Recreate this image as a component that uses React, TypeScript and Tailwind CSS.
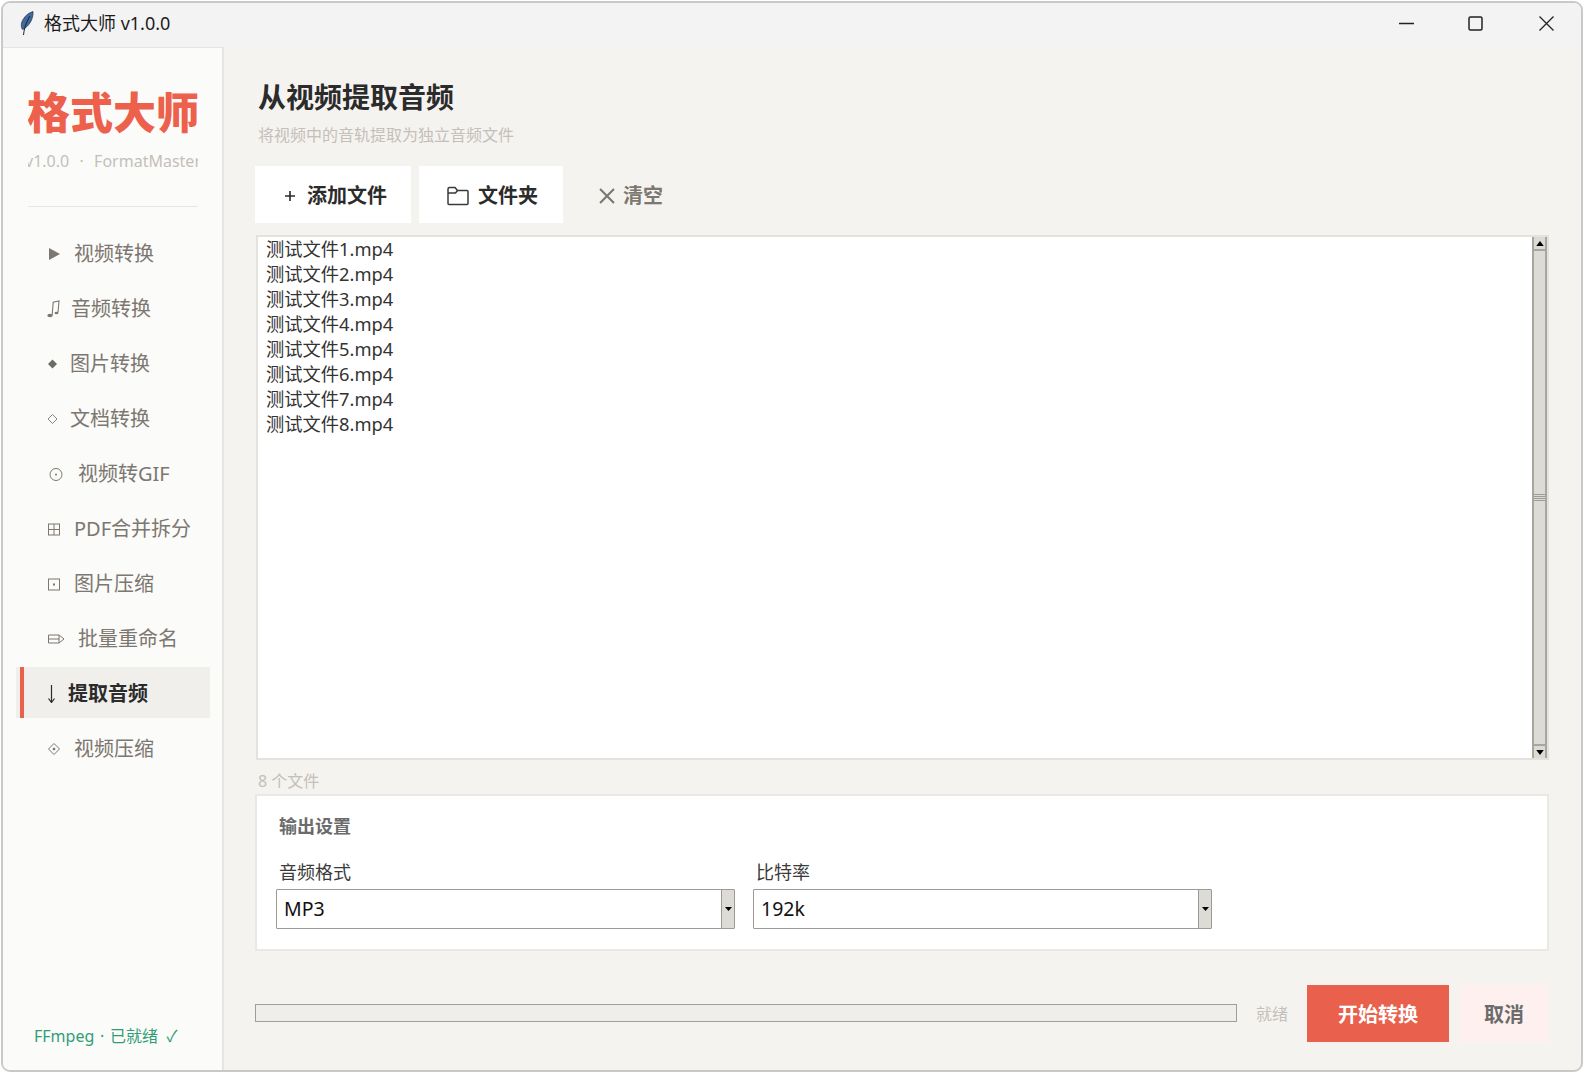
import { ReactNode } from 'react';

const FONT = "font-['Noto_Sans','Noto_Sans_CJK_SC',sans-serif]";

const iconClass = 'h-[16px] w-[16px] shrink-0';

const icons: Record<string, ReactNode> = {
  play: (
    <svg className={iconClass} viewBox="0 0 16 16">
      <path d="M2 2 L13 8 L2 14 Z" fill="#7c7770" />
    </svg>
  ),
  music: (
    <svg className="h-[18px] w-[14px] shrink-0" viewBox="0 0 14 18" fill="none">
      <path d="M5.2 15 L6.2 2.2 L12 1 L11 12.5" stroke="#7c7770" strokeWidth="1.1" />
      <ellipse cx="3" cy="15.5" rx="2.7" ry="1.8" fill="#7c7770" />
      <ellipse cx="9.5" cy="13" rx="1.9" ry="1.3" fill="#7c7770" />
    </svg>
  ),
  diamond: (
    <svg className={iconClass} viewBox="0 0 16 16">
      <path d="M1 8 L5.5 3.5 L10 8 L5.5 12.5 Z" fill="#6f6a64" />
    </svg>
  ),
  diamondOutline: (
    <svg className={iconClass} viewBox="0 0 16 16" fill="none">
      <path d="M1 8 L5.5 3.5 L10 8 L5.5 12.5 Z" stroke="#7c7770" strokeWidth="0.9" />
    </svg>
  ),
  circle: (
    <svg className={iconClass} viewBox="0 0 16 16" fill="none">
      <circle cx="9" cy="8.5" r="6" stroke="#7c7770" strokeWidth="1" />
      <circle cx="9" cy="8.5" r="1" fill="#7c7770" />
    </svg>
  ),
  grid: (
    <svg className={iconClass} viewBox="0 0 16 16" fill="none" stroke="#7c7770" strokeWidth="1">
      <rect x="1.5" y="3" width="11" height="11" />
      <path d="M7 3 V14 M1.5 8.5 H12.5" />
    </svg>
  ),
  dotSquare: (
    <svg className={iconClass} viewBox="0 0 16 16" fill="none">
      <rect x="1.5" y="3" width="11" height="11" stroke="#7c7770" strokeWidth="1" />
      <rect x="6" y="7.5" width="2" height="2" fill="#7c7770" />
    </svg>
  ),
  pencil: (
    <svg className="h-[16px] w-[18px] shrink-0" viewBox="0 0 18 16" fill="none" stroke="#7c7770" strokeWidth="1">
      <path d="M1.5 4 H12 L17 8 L12 12 H1.5 Z" />
      <path d="M1.5 8 H12.5 M12 4 V12" />
    </svg>
  ),
  arrow: (
    <svg className="h-[18px] w-[16px] shrink-0" viewBox="0 0 16 18" fill="none" stroke="#2b2b2b" strokeWidth="1.2">
      <path d="M4.5 0 V17.5 M1.5 13.5 L4.5 17.5 L7.5 13.5" />
    </svg>
  ),
  diamondDot: (
    <svg className={iconClass} viewBox="0 0 16 16" fill="none">
      <path d="M1.5 8 L7 2.5 L12.5 8 L7 13.5 Z" stroke="#7c7770" strokeWidth="1" />
      <rect x="5.8" y="6.8" width="2.4" height="2.4" fill="#7c7770" />
    </svg>
  ),
};

const navItems = [
  { label: '视频转换', icon: 'play', slot: 'w-[27px]' },
  { label: '音频转换', icon: 'music', slot: 'w-[24px]' },
  { label: '图片转换', icon: 'diamond', slot: 'w-[23px]' },
  { label: '文档转换', icon: 'diamondOutline', slot: 'w-[23px]' },
  { label: '视频转GIF', icon: 'circle', slot: 'w-[31px]' },
  { label: 'PDF合并拆分', icon: 'grid', slot: 'w-[27px]' },
  { label: '图片压缩', icon: 'dotSquare', slot: 'w-[27px]' },
  { label: '批量重命名', icon: 'pencil', slot: 'w-[31px]' },
  { label: '提取音频', icon: 'arrow', slot: 'w-[21px]', active: true },
  { label: '视频压缩', icon: 'diamondDot', slot: 'w-[27px]' },
];

const files = [1, 2, 3, 4, 5, 6, 7, 8].map((n) => `测试文件${n}.mp4`);

function Feather() {
  return (
    <svg className="h-[25px] w-[14px]" viewBox="0 0 14 25">
      <path d="M13 0.5 C8 2 3.5 6 1.5 12 C1 15 1.5 17 2.5 18.5 C7 16.5 11 12 12.5 6 C13 4 13.2 2 13 0.5 Z" fill="#3f6a9c" stroke="#24364f" strokeWidth="0.7" />
      <path d="M10 5 C7 10 4.5 15 3.5 24" stroke="#1c2530" strokeWidth="1" fill="none" />
    </svg>
  );
}

function TitleBar() {
  return (
    <div className="flex h-[44px] shrink-0 items-center bg-[#f3f3f3] pb-[4px] pl-[17px]">
      <Feather />
      <span className="ml-[10px] text-[18px] text-[#1c1c1c]">格式大师 v1.0.0</span>
      <div className="ml-auto flex items-center pr-[27px]">
        <svg className="h-[15px] w-[15px]" viewBox="0 0 15 15" fill="none" stroke="#222" strokeWidth="1.3">
          <path d="M0 7.5 H15" />
        </svg>
        <svg className="ml-[54px] h-[15px] w-[15px]" viewBox="0 0 15 15" fill="none" stroke="#222" strokeWidth="1.5">
          <rect x="1" y="1" width="13" height="13" rx="1.5" />
        </svg>
        <svg className="ml-[56px] h-[15px] w-[15px]" viewBox="0 0 15 15" fill="none" stroke="#222" strokeWidth="1.3">
          <path d="M0.5 0.5 L14.5 14.5 M14.5 0.5 L0.5 14.5" />
        </svg>
      </div>
    </div>
  );
}

function Sidebar() {
  return (
    <aside className="flex w-[221px] shrink-0 flex-col border-t border-r-2 border-[#e8e5e0] bg-[#fbfbf9]">
      <div className="mt-[35px] mr-[24px] ml-[25px] flex h-[60px] items-center justify-center overflow-hidden">
        <span className="text-[43px] leading-[60px] font-black whitespace-nowrap text-[#ec604c]">格式大师</span>
      </div>
      <div className="mt-[6px] mr-[24px] ml-[25px] flex h-[24px] justify-center overflow-hidden">
        <span className="text-[16px] leading-[24px] whitespace-nowrap text-[#c4c0b9] [word-spacing:1px]">v1.0.0 &nbsp;·&nbsp; FormatMaster</span>
      </div>
      <div className="mt-[33px] mr-[24px] ml-[25px] h-px bg-[#e8e6e1]" />
      <nav className="mt-[20px] ml-[13px] flex w-[194px] flex-col gap-[4px]">
        {navItems.map((item) => (
          <div
            key={item.label}
            className={`flex h-[51px] items-center pl-[4px] ${item.active ? 'bg-[#f0efec]' : ''}`}
          >
            <span className={`h-full w-[4px] shrink-0 ${item.active ? 'bg-[#e9604c]' : ''}`} />
            <span className="ml-[23px] flex pt-[2px]">
              <span className={`flex ${item.slot}`}>{icons[item.icon]}</span>
            </span>
            <span
              className={`pt-[2px] text-[20px] whitespace-nowrap ${
                item.active ? 'font-bold text-[#2b2b2b]' : 'text-[#7c7770]'
              }`}
            >
              {item.label}
            </span>
          </div>
        ))}
      </nav>
      <div className="mt-auto pb-[22px] pl-[31px] text-[16px] leading-[24px] whitespace-nowrap text-[#2f9e77] [word-spacing:1.5px]">
        FFmpeg · 已就绪 <span className="ml-[3px]">✓</span>
      </div>
    </aside>
  );
}

function ListScrollbar() {
  return (
    <div className="flex w-[15px] shrink-0 flex-col border-x-2 border-[#a9a69e] bg-[#dcdbd6]">
      <div className="flex h-[14px] items-center justify-center border-b-2 border-[#a9a69e]">
        <svg className="h-[5px] w-[8px]" viewBox="0 0 9 6">
          <path d="M4.5 0 L9 6 H0 Z" fill="#000" />
        </svg>
      </div>
      <div className="flex flex-1 flex-col items-center justify-center gap-[1px]">
        <span className="h-px w-full bg-[#a09d96]" />
        <span className="h-px w-full bg-[#a09d96]" />
        <span className="h-px w-full bg-[#a09d96]" />
        <span className="h-px w-full bg-[#a09d96]" />
      </div>
      <div className="flex h-[14px] items-center justify-center border-t-2 border-[#a9a69e]">
        <svg className="h-[5px] w-[8px]" viewBox="0 0 9 6">
          <path d="M0 0 H9 L4.5 6 Z" fill="#000" />
        </svg>
      </div>
    </div>
  );
}

function Select({ value }: { value: string }) {
  return (
    <div className="mt-[4px] flex h-[40px] items-stretch rounded-[1px] border border-[#9c9a92] bg-white">
      <span className="flex flex-1 items-center pl-[7px] text-[19.5px] text-[#111]">{value}</span>
      <span className="flex w-[13px] items-center justify-center border-l border-[#9c9a92] bg-[#dcdbd6]">
        <svg className="h-[4px] w-[7px]" viewBox="0 0 7 4">
          <path d="M0 0 H7 L3.5 4 Z" fill="#000" />
        </svg>
      </span>
    </div>
  );
}

export default function App() {
  return (
    <div className={`h-[1074px] w-[1584px] bg-white p-px ${FONT}`}>
      <div className="flex h-[1071px] w-[1582px] flex-col overflow-hidden rounded-[9px] border-2 border-[#c9c9c9] bg-[#f4f3f0]">
        <TitleBar />
        <div className="flex min-h-0 flex-1">
          <Sidebar />
          <main className="flex min-w-0 flex-1 flex-col pr-[32px] pl-[31px]">
            <h1 className="mt-[30px] ml-[3px] text-[28px] leading-[40px] font-bold text-[#2b2b2b]">从视频提取音频</h1>
            <p className="mt-[6px] ml-[3px] text-[16px] leading-[24px] text-[#c4c0b9]">将视频中的音轨提取为独立音频文件</p>

            <div className="mt-[19px] flex h-[57px] gap-[8px] text-[20px] font-bold">
              <button className="flex w-[156px] items-center gap-[12px] bg-white pt-[2px] pl-[30px] text-[#2b2b2b]">
                <svg className="h-[10px] w-[10px]" viewBox="0 0 11 11" fill="none" stroke="#2b2b2b" strokeWidth="1.8">
                  <path d="M5.5 0 V11 M0 5.5 H11" />
                </svg>
                添加文件
              </button>
              <button className="flex w-[144px] items-center gap-[9px] bg-white pt-[2px] pl-[28px] text-[#2b2b2b]">
                <svg className="h-[20px] w-[22px]" viewBox="0 0 22 20" fill="none" stroke="#3a3a3a" strokeWidth="1.5">
                  <path d="M1 3 C1 2 1.5 1.5 2.5 1.5 H8 L10.5 4.5 H20 C20.6 4.5 21 5 21 5.5 V17.5 C21 18.2 20.6 18.5 20 18.5 H2 C1.4 18.5 1 18.2 1 17.5 Z" />
                  <path d="M1 7 H8.5 L10.5 4.5" />
                </svg>
                文件夹
              </button>
              <button className="ml-[28px] flex items-center gap-[8px] pt-[2px] text-[#7c7770]">
                <svg className="h-[16px] w-[16px]" viewBox="0 0 15 15" fill="none" stroke="#7c7770" strokeWidth="2">
                  <path d="M1 1 L14 14 M14 1 L1 14" />
                </svg>
                清空
              </button>
            </div>

            <div className="mt-[12px] ml-px flex h-[525px] border-2 border-[#e4e2dc] bg-white">
              <div className="-mt-px flex-1 pl-[8px]">
                {files.map((f) => (
                  <div key={f} className="h-[25px] text-[18.3px] leading-[25px] text-[#333]">
                    {f}
                  </div>
                ))}
              </div>
              <ListScrollbar />
            </div>

            <div className="mt-[9px] ml-[3px] text-[16px] leading-[24px] text-[#c4c0b9]">8 个文件</div>

            <section className="mt-px h-[157px] border-2 border-[#eae8e3] bg-white pt-[16px] pl-[19px]">
              <div className="pl-[3px] text-[18px] leading-[28px] font-bold text-[#6b6b6b]">输出设置</div>
              <div className="mt-[19px] grid grid-cols-[459px_459px] gap-x-[18px]">
                <div>
                  <div className="pl-[3px] text-[18px] leading-[26px] text-[#3a3a3a]">音频格式</div>
                  <Select value="MP3" />
                </div>
                <div>
                  <div className="pl-[3px] text-[18px] leading-[26px] text-[#3a3a3a]">比特率</div>
                  <Select value="192k" />
                </div>
              </div>
            </section>

            <div className="mt-[34px] flex h-[57px] items-center">
              <div className="mb-[2px] h-[18px] flex-1 border border-[#a09e96] bg-[#efeeea]" />
              <span className="mr-[19px] ml-[19px] text-[16px] text-[#c4c0b9]">就绪</span>
              <button className="flex h-full w-[142px] items-center justify-center bg-[#e9604c] pt-[2px] text-[20px] font-bold text-white">
                开始转换
              </button>
              <button className="ml-[10px] flex h-full w-[90px] items-center justify-center bg-[#fdf0ef] pt-[2px] text-[20px] font-bold text-[#6b6b6b]">
                取消
              </button>
            </div>
          </main>
        </div>
      </div>
    </div>
  );
}
